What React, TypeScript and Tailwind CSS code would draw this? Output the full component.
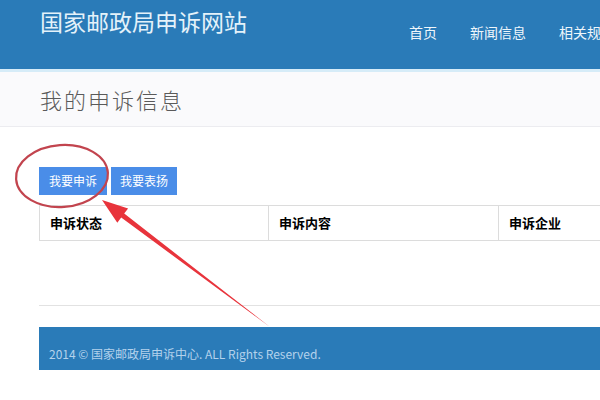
const cjk = { fontFamily: '"Noto Sans CJK SC", "Noto Sans", sans-serif' };

const NAV = ["首页", "新闻信息", "相关规定"];
const COLS = [
  { label: "申诉状态", w: "w-[229px]" },
  { label: "申诉内容", w: "w-[230px]" },
  { label: "申诉企业", w: "w-[240px]" },
];

export default function App() {
  return (
    <div className="relative w-[600px] h-[400px] overflow-hidden bg-white" style={cjk}>
      {/* header */}
      <header className="h-[72px] bg-[#2a7bb8] border-b-[3px] border-[#d6ecf8] flex items-start">
        <h1 className="pl-[40px] pt-[6px] text-[23px] leading-[30px] text-[#e4f2fa] whitespace-nowrap">
          国家邮政局申诉网站
        </h1>
        <nav className="ml-auto flex gap-[33px] pt-[22px] pl-[120px] text-[14px] leading-[20px] text-[#eef6fb] whitespace-nowrap translate-x-[15px]">
          {NAV.map((n) => (
            <span key={n}>{n}</span>
          ))}
        </nav>
      </header>

      {/* page title */}
      <div className="h-[55px] bg-[#fafafc] border-b border-[#ececf0] flex items-center pl-[40px]">
        <h2 className="text-[22px] font-light text-[#5a5a5a] tracking-[2px]">我的申诉信息</h2>
      </div>

      <div className="pl-[39px] pt-[40px]">
        {/* actions */}
        <div className="flex gap-[4px]">
          <button className="w-[68px] h-[28px] bg-[#4a8de8] text-white text-[12px]">我要申诉</button>
          <button className="w-[66px] h-[28px] bg-[#4a8de8] text-white text-[12px]">我要表扬</button>
        </div>

        {/* table */}
        <div className="mt-[10px] flex w-[700px] border-y border-l border-[#dcdcdc] h-[36px]">
          {COLS.map((c) => (
            <div
              key={c.label}
              className={`${c.w} shrink-0 border-r border-[#dcdcdc] flex items-center pl-[10px] text-[13px] font-bold text-black`}
            >
              {c.label}
            </div>
          ))}
        </div>

        <div className="mt-[64px] h-px w-[600px] bg-[#e2e2e2]" />

        {/* footer */}
        <footer className="mt-[21px] h-[43px] w-[600px] bg-[#2a7bb8] flex items-center pl-[10px] pt-[10px] text-[12px] text-[#b4d2ec] whitespace-nowrap">
          2014 © 国家邮政局申诉中心. ALL Rights Reserved.
        </footer>
      </div>

      {/* annotation overlay */}
      <svg className="absolute inset-0 pointer-events-none" width="600" height="400">
        <ellipse cx="62" cy="176" rx="46" ry="31" fill="none" stroke="#c2444e" strokeWidth="2.2" transform="rotate(-4 62 176)" />
        <polygon
          points="102,200 128.1,208.4 124.2,213.6 270,327 121.2,217.6 117.3,222.8"
          fill="#e8343c"
        />
      </svg>
    </div>
  );
}
